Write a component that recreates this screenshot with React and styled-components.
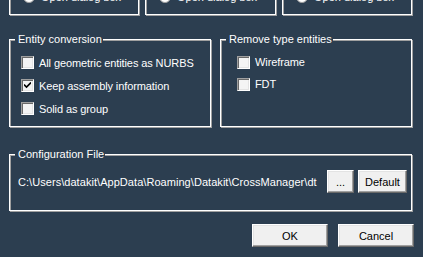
import React from "react";
import styled, { createGlobalStyle } from "styled-components";

const GlobalStyle = createGlobalStyle`
  html, body {
    margin: 0;
    padding: 0;
    background: #2c3e50;
  }
  body {
    font-family: "Liberation Sans", Arial, sans-serif;
    font-size: 11px;
    color: #fff;
  }
`;

const Dialog = styled.div`
  width: 423px;
  height: 257px;
  overflow: hidden;
  box-sizing: border-box;
  padding: 0 0 0 9px;
  display: flex;
  flex-direction: column;
`;

const Group = styled.div`
  position: relative;
  box-sizing: border-box;
  width: ${(p) => p.$w}px;
  height: ${(p) => p.$h}px;
  border: 1px solid #fff;
  box-shadow: 1px 1px 0 #a0a0a0, inset 1px 1px 0 #a0a0a0;
  padding: ${(p) => p.$pad || "0"};
`;

const Legend = styled.span`
  position: absolute;
  top: -8px;
  left: 5px;
  padding: 0 1px 0 3px;
  line-height: 14px;
  background: #2c3e50;
  color: #fff;
  white-space: nowrap;
`;

const TopRow = styled.div`
  display: flex;
  gap: 6px;
  margin-top: -26px;
  height: 41px;
  flex-shrink: 0;
`;

const RadioRow = styled.div`
  display: flex;
  align-items: center;
  gap: 6px;
  padding: 15px 0 0 13px;
  line-height: 14px;
  white-space: nowrap;
`;

const Radio = styled.span`
  width: 12px;
  height: 12px;
  box-sizing: border-box;
  border-radius: 50%;
  background: #fff;
  border: 1px solid #a0a0a0;
  display: flex;
  align-items: center;
  justify-content: center;
  &::after {
    content: "";
    width: 4px;
    height: 4px;
    border-radius: 50%;
    background: #000;
  }
`;

const MiddleRow = styled.div`
  display: flex;
  gap: 9px;
  margin-top: 24px;
  flex-shrink: 0;
`;

const CheckList = styled.div`
  display: flex;
  flex-direction: column;
`;

const CheckRow = styled.label`
  display: flex;
  align-items: center;
  gap: 5px;
  height: ${(p) => p.$h || 23}px;
  white-space: nowrap;
  letter-spacing: -0.1px;
`;

const Box = styled.span`
  width: 13px;
  height: 13px;
  box-sizing: border-box;
  flex-shrink: 0;
  background: #f4f4f4;
  border-top: 1px solid #a0a0a0;
  border-left: 1px solid #a0a0a0;
  border-right: 1px solid #fff;
  border-bottom: 1px solid #fff;
  box-shadow: inset 1px 1px 0 #696969, inset -1px -1px 0 #e3e3e3;
  display: flex;
  align-items: center;
  justify-content: center;
`;

const ConfigGroupWrap = styled.div`
  margin-top: 27px;
  flex-shrink: 0;
`;

const ConfigRow = styled.div`
  display: flex;
  align-items: center;
  padding: 15px 0 0 8px;
`;

const Path = styled.span`
  flex: 1;
  white-space: nowrap;
  overflow: hidden;
  letter-spacing: 0.05px;
`;

const Button = styled.button`
  box-sizing: border-box;
  width: ${(p) => p.$w}px;
  height: 23px;
  margin-left: ${(p) => p.$ml || 0}px;
  padding: 0;
  font-family: "Liberation Sans", Arial, sans-serif;
  font-size: 11px;
  color: #000;
  background: #f0f0f0;
  border-top: 1px solid #fff;
  border-left: 1px solid #fff;
  border-right: 1px solid #696969;
  border-bottom: 1px solid #696969;
  box-shadow: inset -1px -1px 0 #a0a0a0, inset 1px 1px 0 #e3e3e3;
  border-radius: 0;
`;

const Footer = styled.div`
  display: flex;
  justify-content: flex-end;
  gap: 10px;
  margin-top: 13px;
  padding-right: 9px;
`;

function Check({ checked }) {
  return (
    <Box>
      {checked && (
        <svg width="7" height="7" viewBox="0 0 7 7">
          <path d="M0 2.5 L2.5 5 L7 0.5" stroke="#000" strokeWidth="1.6" fill="none" />
        </svg>
      )}
    </Box>
  );
}

function OpenBox() {
  return (
    <RadioRow>
      <Radio />
      <span>Open dialog box</span>
    </RadioRow>
  );
}

export default function App() {
  return (
    <>
      <GlobalStyle />
      <Dialog>
        <TopRow>
          <Group $w={130} $h={41}>
            <OpenBox />
          </Group>
          <Group $w={131} $h={41}>
            <OpenBox />
          </Group>
          <Group $w={130} $h={41}>
            <OpenBox />
          </Group>
        </TopRow>

        <MiddleRow>
          <Group $w={202} $h={88} $pad="11px 0 0 11px">
            <Legend>Entity conversion</Legend>
            <CheckList>
              <CheckRow>
                <Check />
                <span>All geometric entities as NURBS</span>
              </CheckRow>
              <CheckRow>
                <Check checked />
                <span>Keep assembly information</span>
              </CheckRow>
              <CheckRow>
                <Check />
                <span>Solid as group</span>
              </CheckRow>
            </CheckList>
          </Group>
          <Group $w={192} $h={88} $pad="11px 0 0 16px">
            <Legend>Remove type entities</Legend>
            <CheckList>
              <CheckRow $h={22}>
                <Check />
                <span>Wireframe</span>
              </CheckRow>
              <CheckRow $h={22}>
                <Check />
                <span>FDT</span>
              </CheckRow>
            </CheckList>
          </Group>
        </MiddleRow>

        <ConfigGroupWrap>
          <Group $w={403} $h={57}>
            <Legend>Configuration File</Legend>
            <ConfigRow>
              <Path>C:\Users\datakit\AppData\Roaming\Datakit\CrossManager\dt</Path>
              <Button $w={27}>...</Button>
              <Button $w={49} $ml={4}>Default</Button>
              <span style={{ width: 4 }} />
            </ConfigRow>
          </Group>
        </ConfigGroupWrap>

        <Footer>
          <Button $w={76}>OK</Button>
          <Button $w={76}>Cancel</Button>
        </Footer>
      </Dialog>
    </>
  );
}
